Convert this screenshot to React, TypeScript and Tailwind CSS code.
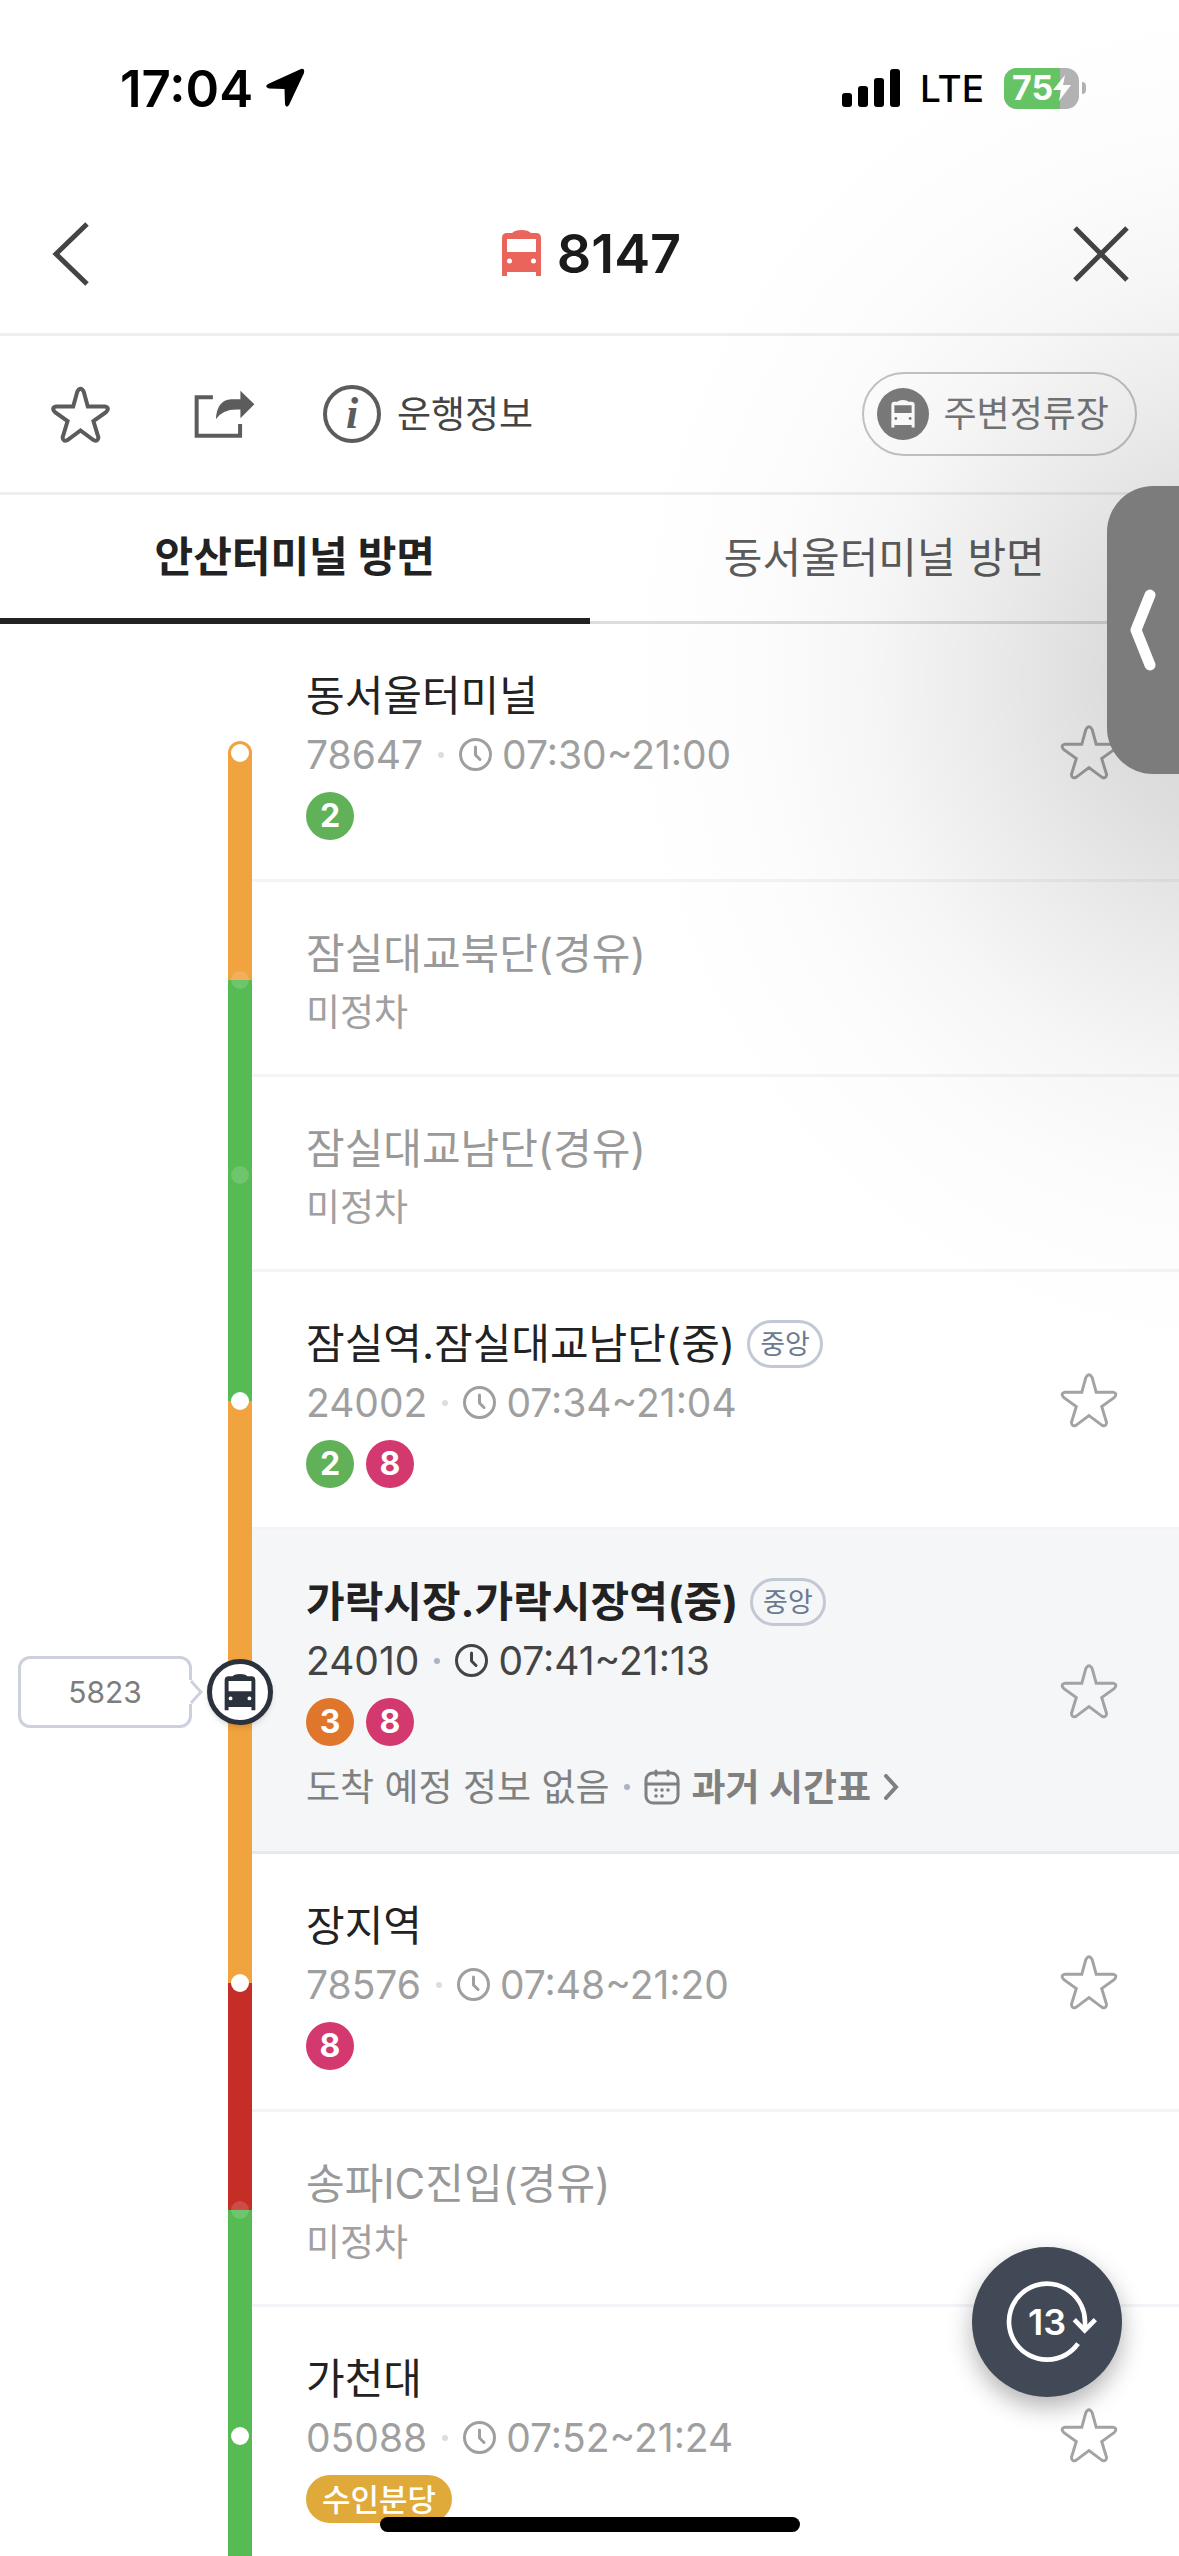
import { useState } from "react";
import clsx from "clsx";

interface ILine {
    name: string;
    color: string;
}

interface IStop {
    id: string;
    name: string;
    code?: string;
    time?: string;
    central?: boolean;
    current?: boolean;
    lines?: ILine[];
    railTop: string;
    railBottom: string;
}

const ORANGE = "bg-[#f0a33e]";
const GREEN = "bg-[#55bb52]";
const RED = "bg-[#c52d27]";

const LINE_2: ILine = { name: "2", color: "bg-[#60b158]" };
const LINE_3: ILine = { name: "3", color: "bg-[#df762c]" };
const LINE_8: ILine = { name: "8", color: "bg-[#d3386e]" };
const LINE_SUIN: ILine = { name: "수인분당", color: "bg-[#dfaa3a]" };

const STOPS: IStop[] = [
    { id: "s1", name: "동서울터미널", code: "78647", time: "07:30~21:00", lines: [LINE_2], railTop: "", railBottom: ORANGE },
    { id: "s2", name: "잠실대교북단(경유)", railTop: ORANGE, railBottom: GREEN },
    { id: "s3", name: "잠실대교남단(경유)", railTop: GREEN, railBottom: GREEN },
    { id: "s4", name: "잠실역.잠실대교남단(중)", code: "24002", time: "07:34~21:04", central: true, lines: [LINE_2, LINE_8], railTop: GREEN, railBottom: ORANGE },
    { id: "s5", name: "가락시장.가락시장역(중)", code: "24010", time: "07:41~21:13", central: true, current: true, lines: [LINE_3, LINE_8], railTop: ORANGE, railBottom: ORANGE },
    { id: "s6", name: "장지역", code: "78576", time: "07:48~21:20", lines: [LINE_8], railTop: ORANGE, railBottom: RED },
    { id: "s7", name: "송파IC진입(경유)", railTop: RED, railBottom: GREEN },
    { id: "s8", name: "가천대", code: "05088", time: "07:52~21:24", lines: [LINE_SUIN], railTop: GREEN, railBottom: GREEN },
];

// ICONS
function BusIcon({ className }: { className?: string }) {
    return (
        <svg viewBox="0 0 39 47" fill="currentColor" fillRule="evenodd" className={className} aria-hidden="true">
            <path d="M10 3Q13 0 19.500 0Q26 0 29 3H34Q39 3 39 8V46H34V42H5V46H0V8Q0 3 5 3ZM5 9V22H34V9ZM7.500 28.500A2.500 2.500 0 1 0 7.500 33.500A2.500 2.500 0 1 0 7.500 28.500ZM31.500 28.500A2.500 2.500 0 1 0 31.500 33.500A2.500 2.500 0 1 0 31.500 28.500Z" />
        </svg>
    );
}

function StarIcon({ className, stroke }: { className?: string; stroke: number }) {
    return (
        <svg viewBox="34 44 178 172" fill="none" stroke="currentColor" strokeWidth={stroke} className={className} aria-hidden="true">
            <path d="M101 106L113 62Q123 43 133 62L145 106L196 106Q213 110 200 123L162 150L177 199Q176 214 162 207L123 178L84 207Q70 214 69 199L84 150L46 123Q33 110 50 106Z" />
        </svg>
    );
}

function ClockIcon() {
    return (
        <svg viewBox="0 0 33 33" fill="none" stroke="currentColor" strokeWidth="3" strokeLinecap="round" strokeLinejoin="round" className="h-[33px] w-[33px]" aria-hidden="true">
            <circle cx="16.500" cy="16.500" r="15" />
            <path d="M16.500 9V17L21 21.500" />
        </svg>
    );
}

function CalendarIcon() {
    return (
        <svg viewBox="0 0 36 36" fill="none" stroke="currentColor" strokeWidth="3" strokeLinecap="round" className="h-9 w-9" aria-hidden="true">
            <rect x="2" y="4" width="32" height="30" rx="7" />
            <path d="M2 15H34M12 2V6M24 2V6" />
            <g fill="currentColor" stroke="none">
                <circle cx="12" cy="21" r="1.800" />
                <circle cx="18" cy="21" r="1.800" />
                <circle cx="24" cy="21" r="1.800" />
                <circle cx="12" cy="27" r="1.800" />
                <circle cx="18" cy="27" r="1.800" />
            </g>
        </svg>
    );
}

function StatusBar() {
    return (
        <div className="flex h-[176px] items-center justify-between pr-[93px] pl-[120px] text-black">
            <div className="flex items-center gap-3">
                <span className="text-[51px] leading-none font-semibold">17:04</span>
                <svg viewBox="0 0 40 40" className="h-10 w-10" aria-hidden="true">
                    <path d="M36 1Q40 0 39 5L24 37Q21 41 20 36L19.500 21L4 20.500Q-1 19 3 16Z" />
                </svg>
            </div>
            <div className="flex items-center">
                <svg viewBox="0 0 58 38" className="h-[38px] w-[58px]" aria-hidden="true">
                    <rect x="0" y="24" width="10" height="14" rx="3" />
                    <rect x="16" y="17" width="10" height="21" rx="3" />
                    <rect x="32" y="9" width="10" height="29" rx="3" />
                    <rect x="48" y="0" width="10" height="38" rx="3" />
                </svg>
                <span className="ml-5 text-[37px] leading-none font-medium">LTE</span>
                <div className="ml-5 flex items-center gap-[3px]">
                    <div className="relative flex h-[41px] w-[75px] items-center overflow-hidden rounded-[13px] bg-[#b3b3b3]">
                        <div className="h-full w-3/4 bg-[#65c466]" />
                        <div className="absolute inset-0 flex items-center pl-2 text-white">
                            <span className="text-[34px] leading-none font-bold">75</span>
                            <svg viewBox="0 0 18 26" fill="currentColor" className="h-[26px] w-[18px]" aria-hidden="true">
                                <path d="M12 0L0 15H8L6 26L18 10H10Z" />
                            </svg>
                        </div>
                    </div>
                    <div className="h-3 w-[4px] rounded-r-full bg-[#b3b3b3]" />
                </div>
            </div>
        </div>
    );
}

function Header() {
    return (
        <header className="flex h-[160px] items-center justify-between border-b-[3px] border-[#eeeeee] px-[50px] pb-[2px] text-[#444]">
            <button type="button" aria-label="뒤로" className="w-[60px]">
                <svg viewBox="0 0 40 64" fill="none" stroke="currentColor" strokeWidth="5" className="h-16 w-10" aria-hidden="true">
                    <path d="M37 2L6 32L37 62" />
                </svg>
            </button>
            <h1 className="flex items-center gap-4 text-[#1a1a1a]">
                <BusIcon className="h-[47px] w-[39px] text-[#e9645b]" />
                <span className="text-[54px] leading-none font-semibold">8147</span>
            </h1>
            <button type="button" aria-label="닫기" className="w-14">
                <svg viewBox="0 0 56 56" fill="none" stroke="currentColor" strokeWidth="5" className="h-14 w-14" aria-hidden="true">
                    <path d="M2 2L54 54M54 2L2 54" />
                </svg>
            </button>
        </header>
    );
}

function Toolbar() {
    return (
        <div className="flex h-[159px] items-center justify-between border-b-[3px] border-[#eeeeee] pr-[42px] pl-[51px] leading-none">
            <div className="flex items-center text-[#5c5c5c]">
                <button type="button" aria-label="즐겨찾기">
                    <StarIcon stroke={12} className="h-[57px] w-[59px]" />
                </button>
                <button type="button" aria-label="공유" className="ml-[84px]">
                    <svg viewBox="463 60 184 146" className="h-[49px] w-[61px]" aria-hidden="true">
                        <path d="M520 81H471V197H602V162" fill="none" stroke="currentColor" strokeWidth="12" />
                        <path d="M603 61L645 102L603 144V118Q550 114 529 147Q532 90 575 87H603Z" fill="currentColor" />
                    </svg>
                </button>
                <button type="button" className="ml-[68px] flex items-center gap-4">
                    <span className="flex h-[58px] w-[58px] items-center justify-center rounded-full border-4 border-[#5c5c5c] font-['Liberation_Serif',serif] text-[44px] leading-none font-bold italic">
                        i
                    </span>
                    <span className="text-[37px] text-[#444]">운행정보</span>
                </button>
            </div>
            <button type="button" className="flex h-[84px] items-center gap-[14px] rounded-full border-2 border-[#c4c4c4] pr-[26px] pl-[13px] text-[36px] text-[#777]">
                <span className="flex h-[52px] w-[52px] items-center justify-center rounded-full bg-[#7b7b7b]">
                    <BusIcon className="h-[28px] w-6 text-white" />
                </span>
                주변정류장
            </button>
        </div>
    );
}

function LineBadge({ line }: { line: ILine }) {
    const isNumber = line.name.length === 1;
    return (
        <span
            className={clsx(
                "flex h-12 items-center justify-center rounded-full leading-none text-white",
                line.color,
                isNumber ? "w-12 text-[32px] font-bold" : "px-4 text-[31px] font-medium"
            )}
        >
            {line.name}
        </span>
    );
}

function Rail({ stop }: { stop: IStop }) {
    const first = stop.railTop === "";
    return (
        <div className="relative flex w-6 shrink-0 flex-col">
            <div className={clsx("flex-1", stop.railTop)} />
            <div className={clsx("flex-1", stop.railBottom)} />
            <div className="absolute inset-0 flex items-center justify-center">
                {stop.current ? (
                    <span className="flex h-[66px] w-[66px] shrink-0 items-center justify-center rounded-full border-[5px] border-[#2b323e] bg-white text-[#2b323e] shadow-md">
                        <BusIcon className="h-[37px] w-8" />
                    </span>
                ) : (
                    <span className={clsx("flex h-6 w-6 items-center justify-center rounded-full", first && ORANGE)}>
                        <span className={clsx("h-[18px] w-[18px] rounded-full", stop.code ? "bg-white" : "bg-white/15")} />
                    </span>
                )}
            </div>
        </div>
    );
}

function StopRow({ stop }: { stop: IStop }) {
    return (
        <li className="flex">
            <div className="flex w-[228px] shrink-0 items-center pl-[18px]">
                {stop.current && (
                    <div className="flex items-center">
                        <span className="flex h-[72px] w-[174px] items-center justify-center rounded-xl border-[3px] border-[#cdd1dd] bg-white text-[30px] leading-none text-[#7d7d7d]">
                            5823
                        </span>
                        <svg viewBox="0 0 14 24" className="relative -left-[3px] h-6 w-[14px]" aria-hidden="true">
                            <path d="M0 0H3L13 12L3 24H0Z" fill="#fff" />
                            <path d="M2 1L12 12L2 23" fill="none" stroke="#cdd1dd" strokeWidth="3" />
                        </svg>
                    </div>
                )}
            </div>
            <Rail stop={stop} />
            <div
                className={clsx(
                    "flex min-w-0 flex-1 items-center justify-between border-b-[3px] pr-[61px] pl-[54px]",
                    stop.current ? "border-[#e6e9ef] bg-[#f4f6f8]" : "border-[#f3f4f7]"
                )}
            >
                <div className="pt-[42px] pb-[33px]">
                    <a href={`#${stop.id}`} className="flex h-[60px] items-center gap-3">
                        <span
                            className={clsx(
                                "text-[42px] leading-none",
                                !stop.code ? "text-[#999]" : "text-[#222]",
                                stop.current && "font-bold"
                            )}
                        >
                            {stop.name}
                        </span>
                        {stop.central && (
                            <span className="flex h-12 items-center rounded-full border-[3px] border-[#c2c8d4] px-[10px] text-[27px] leading-none text-[#6b7a90]">
                                중앙
                            </span>
                        )}
                    </a>
                    {stop.code ? (
                        <div
                            className={clsx(
                                "flex h-[57px] items-center text-[39px] leading-none",
                                stop.current ? "text-[#444]" : "text-[#9f9f9f]"
                            )}
                        >
                            <span>{stop.code}</span>
                            <span className={clsx("mx-[15px] h-[6px] w-[6px] rounded-full", stop.current ? "bg-[#a9b3c4]" : "bg-[#dddddd]")} />
                            <ClockIcon />
                            <span className="ml-[10px]">{stop.time}</span>
                        </div>
                    ) : (
                        <p className="flex h-[57px] items-center text-[37px] leading-none text-[#a0a0a0]">미정차</p>
                    )}
                    {stop.lines && (
                        <div className="mt-[9px] mb-[6px] flex gap-3">
                            {stop.lines.map((line) => (
                                <LineBadge key={line.name} line={line} />
                            ))}
                        </div>
                    )}
                    {stop.current && (
                        <div className="flex h-[66px] items-center pt-1 text-[37px] leading-none text-[#808080]">
                            <span>도착 예정 정보 없음</span>
                            <span className="mx-[14px] h-[6px] w-[6px] rounded-full bg-[#a9b3c4]" />
                            <a href="#timetable" className="flex items-center gap-3 font-semibold">
                                <CalendarIcon />
                                과거 시간표
                                <svg viewBox="0 0 16 26" fill="none" stroke="currentColor" strokeWidth="4" strokeLinecap="round" className="h-[26px] w-4" aria-hidden="true">
                                    <path d="M3 2L13 13L3 24" />
                                </svg>
                            </a>
                        </div>
                    )}
                </div>
                {stop.code && (
                    <button type="button" aria-label={`${stop.name} 즐겨찾기`} className="shrink-0 text-[#a3a3a3]">
                        <StarIcon stroke={9} className="h-[56px] w-[58px]" />
                    </button>
                )}
            </div>
        </li>
    );
}

function App() {
    // STATE
    const [tab, setTab] = useState(0);
    const tabs = ["안산터미널 방면", "동서울터미널 방면"];

    return (
        <div className="relative flex h-screen flex-col overflow-hidden bg-white font-[Inter,'Noto_Sans_CJK_KR',sans-serif]">
            <StatusBar />
            <Header />
            <Toolbar />

            <div role="tablist" className="flex h-[129px] shrink-0">
                {tabs.map((name, index) => (
                    <button
                        key={name}
                        type="button"
                        role="tab"
                        aria-selected={tab === index}
                        onClick={() => setTab(index)}
                        className={clsx(
                            "flex flex-1 items-center justify-center text-[42px] leading-none",
                            tab === index
                                ? "border-b-[6px] border-[#222] font-bold text-[#222]"
                                : "border-b-[3px] border-[#dddddd] text-[#5c5c5c]"
                        )}
                    >
                        {name}
                    </button>
                ))}
            </div>

            <ul className="min-h-0 flex-1 overflow-y-auto [scrollbar-width:none]">
                {STOPS.map((stop) => (
                    <StopRow key={stop.id} stop={stop} />
                ))}
            </ul>

            {/* side handle and its wide soft shadow */}
            <div className="pointer-events-none absolute top-[20px] right-0 h-[1320px] w-[620px] bg-[radial-gradient(620px_680px_at_calc(100%+60px)_50%,rgba(0,0,0,0.155)_0%,rgba(0,0,0,0.135)_22%,rgba(0,0,0,0.078)_42%,rgba(0,0,0,0.036)_60%,rgba(0,0,0,0.012)_78%,rgba(0,0,0,0)_100%)]" />
            <button type="button" aria-label="열기" className="absolute top-[486px] right-0 flex h-[288px] w-[72px] items-center justify-center rounded-l-[46px] bg-[#7c7c7c] text-white">
                <svg viewBox="0 0 28 84" fill="none" stroke="currentColor" strokeWidth="11" strokeLinecap="round" strokeLinejoin="round" className="h-[84px] w-7" aria-hidden="true">
                    <path d="M21 7L7 42L21 77" />
                </svg>
            </button>

            <button type="button" aria-label="새로고침" className="absolute right-[57px] bottom-[159px] flex h-[150px] w-[150px] items-center justify-center rounded-full bg-[#404955] text-white shadow-[0_10px_24px_rgba(0,0,0,0.3)]">
                <svg viewBox="36 21 450 450" fill="none" stroke="currentColor" strokeWidth="14" className="absolute inset-0" aria-hidden="true">
                    <path d="M354 311A114 114 0 1 1 375 246V268" />
                    <path d="M343 239L374 271L406 239" />
                </svg>
                <span className="text-[36px] leading-none font-semibold">13</span>
            </button>

            <div className="absolute bottom-6 left-1/2 h-[15px] w-[420px] -translate-x-1/2 rounded-full bg-black" />
        </div>
    );
}

export default App;
